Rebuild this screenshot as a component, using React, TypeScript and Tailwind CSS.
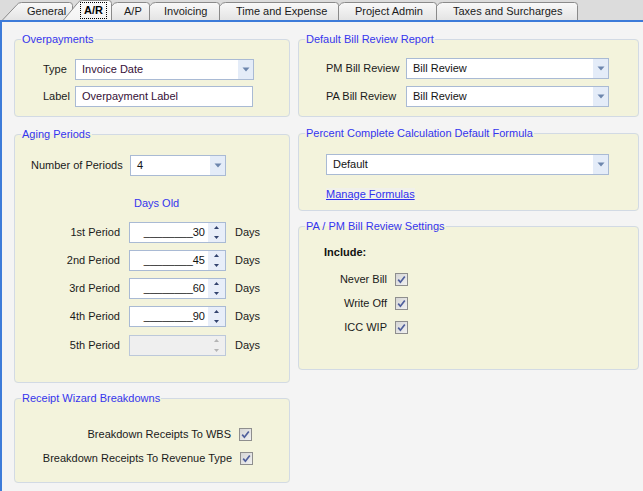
import React from "react";

type Tab = { label: string; w: number; cls: string; active?: boolean };

const tabs: Tab[] = [
  { label: "General", w: 71, cls: "ml-[2px] w-[71px] pl-[25px] z-[7]" },
  { label: "A/R", w: 49, cls: "-ml-[10px] w-[49px] pl-[17px] z-[10]", active: true },
  { label: "A/P", w: 52, cls: "-ml-[14px] w-[52px] pl-[26px] z-[6]" },
  { label: "Invoicing", w: 84, cls: "-ml-[14px] w-[84px] pl-[28px] z-[5]" },
  { label: "Time and Expense", w: 133, cls: "-ml-[14px] w-[133px] pl-[30px] z-[4]" },
  { label: "Project Admin", w: 112, cls: "-ml-[14px] w-[112px] pl-[30px] z-[3]" },
  { label: "Taxes and Surcharges", w: 155, cls: "-ml-[14px] w-[155px] pl-[30px] z-[2]" },
];

function TabShape({ w, h, active, id }: { w: number; h: number; active?: boolean; id: string }) {
  const d = `M0.5,${h} L14.5,3.2 Q16.2,0.5 19.5,0.5 L${w - 3.5},0.5 Q${w - 0.5},0.5 ${w - 0.5},3.5 L${w - 0.5},${h}`;
  return (
    <svg className="absolute inset-0" width={w} height={h} viewBox={`0 0 ${w} ${h}`}>
      <defs>
        <linearGradient id={id} x1="0" y1="0" x2="0" y2="1">
          <stop offset="0" stopColor={active ? "#fbfbfb" : "#f9f9f9"} />
          <stop offset="1" stopColor={active ? "#f3f3f3" : "#e4e4e4"} />
        </linearGradient>
      </defs>
      <path d={d} fill={`url(#${id})`} stroke="#8a8a8a" strokeWidth="1" />
    </svg>
  );
}

function Group({
  title,
  className,
  children,
}: {
  title: string;
  className: string;
  children: React.ReactNode;
}) {
  return (
    <fieldset className={`min-w-0 rounded-[4px] border border-[#d2dae4] bg-[#f3f3dc] ${className}`}>
      <legend className="ml-[6px] px-[1px] leading-[14px] text-[#3535ee]">{title}</legend>
      {children}
    </fieldset>
  );
}

function Select({ value, className, purple }: { value: string; className: string; purple?: boolean }) {
  return (
    <div className={`flex h-[21px] items-stretch border border-[#a9bad4] bg-white ${className}`}>
      <div className={`flex flex-1 items-center pl-[6px] ${purple ? "text-[#351037]" : "text-[#141414]"}`}>
        {value}
      </div>
      <div className="flex w-[15px] items-center justify-center bg-[#e4ecf8]">
        <svg width="8" height="5" viewBox="0 0 8 5">
          <polygon points="0.5,0.5 7.5,0.5 4,4.5" fill="#6d86ad" />
        </svg>
      </div>
    </div>
  );
}

function Spinner({ value, disabled }: { value?: string; disabled?: boolean }) {
  const arrow = disabled ? "#b4b4b4" : "#32436e";
  return (
    <div
      className={`ml-[9px] flex h-[21px] w-[97px] items-stretch border ${
        disabled ? "border-[#bcc8da] bg-[#efefef]" : "border-[#a9bad4] bg-white"
      }`}
    >
      <div className="flex flex-1 items-center justify-end pr-[3px] text-[#111]">
        {value ? `________${value}` : ""}
      </div>
      <div className={`flex w-[17px] flex-col ${disabled ? "bg-[#efefef]" : "bg-[#e8eef9]"}`}>
        <div className="flex flex-1 items-center justify-center">
          <svg width="5" height="3" viewBox="0 0 5 3">
            <polygon points="2.5,0 5,3 0,3" fill={arrow} />
          </svg>
        </div>
        <div className="flex flex-1 items-center justify-center">
          <svg width="5" height="3" viewBox="0 0 5 3">
            <polygon points="0,0 5,0 2.5,3" fill={arrow} />
          </svg>
        </div>
      </div>
    </div>
  );
}

function Check() {
  return (
    <svg width="13" height="13" viewBox="0 0 13 13" className="shrink-0">
      <defs>
        <linearGradient id="cbg" x1="0" y1="0" x2="1" y2="1">
          <stop offset="0" stopColor="#d4d4d4" />
          <stop offset="1" stopColor="#f2f2f2" />
        </linearGradient>
      </defs>
      <rect x="0.5" y="0.5" width="12" height="12" fill="url(#cbg)" stroke="#8e8e8e" />
      <path d="M3.2,6.6 L5.4,9.2 L9.8,3.4" fill="none" stroke="#4f5f9c" strokeWidth="1.7" />
    </svg>
  );
}

function PeriodRow({ label, value, disabled, className }: { label: string; value?: string; disabled?: boolean; className?: string }) {
  return (
    <div className={`flex items-center ${className ?? ""}`}>
      <span className="w-[105px] text-right">{label}</span>
      <Spinner value={value} disabled={disabled} />
      <span className="ml-[9px]">Days</span>
    </div>
  );
}

export default function App() {
  return (
    <div className="h-[491px] w-[643px] overflow-hidden bg-[#f4f4f4] font-['Liberation_Sans',Arial,sans-serif] text-[11px] leading-[13px] text-[#1a1a1a]">
      {/* Tab strip */}
      <div className="flex h-[22px] items-end border-b-2 border-[#3d7bd9] bg-[#dcdcdc]">
        {tabs.map((t, i) =>
          t.active ? (
            <div key={t.label} className={`relative flex h-[20px] items-center ${t.cls}`}>
              <TabShape w={t.w} h={20} active id={`tg${i}`} />
              <span className="relative flex h-[17px] items-center border border-dotted border-black px-[3px] font-bold text-black">
                {t.label}
              </span>
            </div>
          ) : (
            <div key={t.label} className={`relative flex h-[18px] items-center ${t.cls}`}>
              <TabShape w={t.w} h={18} id={`tg${i}`} />
              <span className="relative pt-[1px] text-[#1a1a1a]">{t.label}</span>
            </div>
          )
        )}
      </div>

      {/* Content */}
      <div className="flex h-[469px] gap-[8px] border-l-2 border-[#3d7bd9] pl-[12px] pt-[10px]">
        {/* Left column */}
        <div className="flex w-[276px] flex-col">
          <Group title="Overpayments" className="pb-[9px] pt-[13px]">
            <div className="flex flex-col gap-[6px] pl-[28px]">
              <div className="flex items-center">
                <span className="w-[32px]">Type</span>
                <Select value="Invoice Date" className="w-[179px]" purple />
              </div>
              <div className="flex items-center">
                <span className="w-[32px]">Label</span>
                <div className="flex h-[21px] w-[178px] items-center border border-[#a9bad4] bg-white pl-[6px] text-[#351037]">
                  Overpayment Label
                </div>
              </div>
            </div>
          </Group>

          <Group title="Aging Periods" className="mt-[10px] pb-[26px] pt-[14px]">
            <div className="flex items-center pl-[16px]">
              <span className="w-[99px]">Number of Periods</span>
              <Select value="4" className="w-[96px]" />
            </div>
            <div className="mt-[21px] pl-[119px] text-[#3535ee]">Days Old</div>
            <div className="mt-[12px] flex flex-col gap-[7px]">
              <PeriodRow label="1st Period" value="30" />
              <PeriodRow label="2nd Period" value="45" />
              <PeriodRow label="3rd Period" value="60" />
              <PeriodRow label="4th Period" value="90" />
              <PeriodRow label="5th Period" disabled className="mt-[1px]" />
            </div>
          </Group>

          <Group title="Receipt Wizard Breakdowns" className="mt-[8px] pb-[17px] pt-[23px]">
            <div className="flex flex-col gap-[11px]">
              <div className="flex items-center">
                <span className="w-[216px] text-right">Breakdown Receipts To WBS</span>
                <span className="ml-[8px] flex">
                  <Check />
                </span>
              </div>
              <div className="flex items-center">
                <span className="w-[217px] text-right">Breakdown Receipts To Revenue Type</span>
                <span className="ml-[8px] flex">
                  <Check />
                </span>
              </div>
            </div>
          </Group>
        </div>

        {/* Right column */}
        <div className="flex w-[341px] flex-col">
          <Group title="Default Bill Review Report" className="pb-[9px] pt-[12px]">
            <div className="flex flex-col gap-[7px] pl-[27px]">
              <div className="flex items-center">
                <span className="w-[80px]">PM Bill Review</span>
                <Select value="Bill Review" className="w-[203px]" />
              </div>
              <div className="flex items-center">
                <span className="w-[80px]">PA Bill Review</span>
                <Select value="Bill Review" className="w-[203px]" />
              </div>
            </div>
          </Group>

          <Group title="Percent Complete Calculation Default Formula" className="mt-[9px] pb-[9px] pt-[14px]">
            <div className="pl-[27px]">
              <Select value="Default" className="w-[283px]" />
              <div className="mt-[13px] flex">
                <span className="bg-[#f1f1ea] text-[#3030ee] underline">Manage Formulas</span>
              </div>
            </div>
          </Group>

          <Group title="PA / PM Bill Review Settings" className="mt-[8px] pb-[35px] pt-[13px]">
            <div className="pl-[25px] font-bold text-[#111]">Include:</div>
            <div className="mt-[14px] flex flex-col gap-[11px]">
              {["Never Bill", "Write Off", "ICC WIP"].map((l) => (
                <div key={l} className="flex items-center">
                  <span className="w-[88px] text-right">{l}</span>
                  <span className="ml-[8px] flex">
                    <Check />
                  </span>
                </div>
              ))}
            </div>
          </Group>
        </div>
      </div>
    </div>
  );
}
